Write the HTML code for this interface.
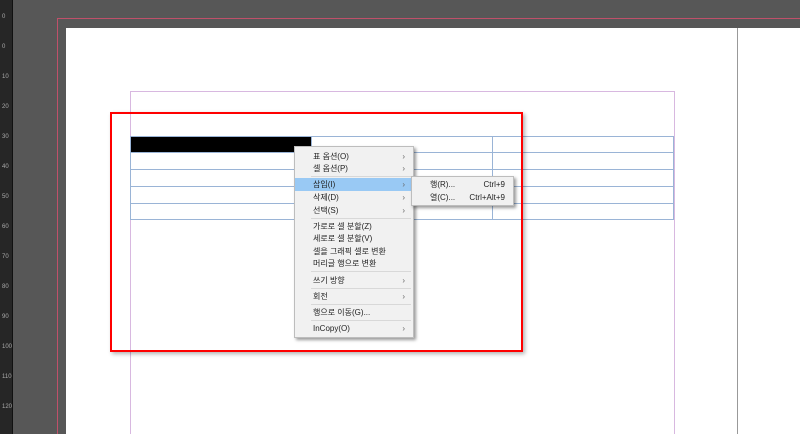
<!DOCTYPE html>
<html style="margin:0;width:800px;height:434px;overflow:hidden"><head><meta charset="utf-8"><style>
body{margin:0;width:800px;height:434px;overflow:hidden;background:#575757;position:relative;font-family:"Liberation Sans","Noto Sans CJK KR",sans-serif}
.a{position:absolute}
.ruler{left:0;top:0;width:12px;height:434px;background:#262626;border-right:1px solid #111}
.menu{background:#f1f1f1;border:1px solid #bdbdbd;box-shadow:2px 2px 3px rgba(0,0,0,.4);font-size:8px;color:#222}
.it{position:absolute;left:0;right:0;height:13px;line-height:13px;padding-left:18px}
.it b{position:absolute;right:8px;font-weight:normal;color:#666}
.sep{position:absolute;left:16px;right:2px;height:1px;background:#d8d8d8}
.hl{background:#99c9f4}
.h{position:absolute;left:130px;width:543px;height:1px;background:#9ab4d6}
.v{position:absolute;top:136px;width:1px;height:84px;background:#9ab4d6}
</style></head><body>
<div class="a ruler"></div>
<div class="a" style="left:2px;top:2px;font-size:6px;color:#aaa;line-height:30px;width:8px">0<br>0<br>10<br>20<br>30<br>40<br>50<br>60<br>70<br>80<br>90<br>100<br>110<br>120</div>
<div class="a" style="left:57px;top:18px;width:760px;height:430px;border:1px solid #c0506a"></div>
<div class="a" style="left:66px;top:28px;width:734px;height:406px;background:#fff"></div>
<div class="a" style="left:737px;top:28px;width:1px;height:406px;background:#999"></div>
<div class="a" style="left:130px;top:91px;width:543px;height:343px;border:1px solid #d8b8e0;border-bottom:none"></div>
<div class="a" style="left:130px;top:136px;width:181px;height:16px;background:#000"></div>
<div class="h" style="top:136px"></div><div class="h" style="top:152px"></div><div class="h" style="top:169px"></div><div class="h" style="top:186px"></div><div class="h" style="top:203px"></div><div class="h" style="top:219px"></div>
<div class="v" style="left:130px"></div><div class="v" style="left:311px"></div><div class="v" style="left:492px"></div><div class="v" style="left:673px"></div>
<div class="a" style="left:110px;top:112px;width:409px;height:236px;border:2px solid #f00;box-shadow:2px 2px 4px rgba(0,0,0,.3)"></div>
<div class="a menu" style="left:294px;top:146px;width:118px;height:190px">
<div class="it" style="top:3px">표 옵션(O)<b>›</b></div>
<div class="it" style="top:15px">셀 옵션(P)<b>›</b></div>
<div class="sep" style="top:29px"></div>
<div class="it hl" style="top:31px">삽입(I)<b>›</b></div>
<div class="it" style="top:44px">삭제(D)<b>›</b></div>
<div class="it" style="top:57px">선택(S)<b>›</b></div>
<div class="sep" style="top:71px"></div>
<div class="it" style="top:73px">가로로 셀 분할(Z)</div>
<div class="it" style="top:85px">세로로 셀 분할(V)</div>
<div class="it" style="top:98px">셀을 그래픽 셀로 변환</div>
<div class="it" style="top:110px">머리글 행으로 변환</div>
<div class="sep" style="top:124px"></div>
<div class="it" style="top:127px">쓰기 방향<b>›</b></div>
<div class="sep" style="top:141px"></div>
<div class="it" style="top:143px">회전<b>›</b></div>
<div class="sep" style="top:157px"></div>
<div class="it" style="top:159px">행으로 이동(G)...</div>
<div class="sep" style="top:173px"></div>
<div class="it" style="top:175px">InCopy(O)<b>›</b></div>
</div>
<div class="a menu" style="left:411px;top:176px;width:101px;height:28px">
<div class="it" style="top:1px">행(R)...<b style="color:#222">Ctrl+9</b></div>
<div class="it" style="top:14px">열(C)...<b style="color:#222">Ctrl+Alt+9</b></div>
</div>
</body></html>
